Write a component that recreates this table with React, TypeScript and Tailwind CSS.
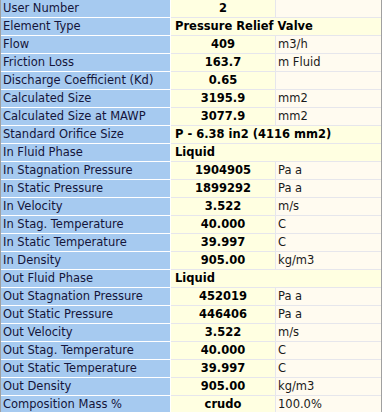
type Row = { label: string; value: string; unit?: string; span?: boolean }

const rows: Row[] = [
    { label: "User Number", value: "2", unit: "" },
    { label: "Element Type", value: "Pressure Relief Valve", span: true },
    { label: "Flow", value: "409", unit: "m3/h" },
    { label: "Friction Loss", value: "163.7", unit: "m Fluid" },
    { label: "Discharge Coefficient (Kd)", value: "0.65", unit: "" },
    { label: "Calculated Size", value: "3195.9", unit: "mm2" },
    { label: "Calculated Size at MAWP", value: "3077.9", unit: "mm2" },
    { label: "Standard Orifice Size", value: "P - 6.38 in2 (4116 mm2)", span: true },
    { label: "In Fluid Phase", value: "Liquid", span: true },
    { label: "In Stagnation Pressure", value: "1904905", unit: "Pa a" },
    { label: "In Static Pressure", value: "1899292", unit: "Pa a" },
    { label: "In Velocity", value: "3.522", unit: "m/s" },
    { label: "In Stag. Temperature", value: "40.000", unit: "C" },
    { label: "In Static Temperature", value: "39.997", unit: "C" },
    { label: "In Density", value: "905.00", unit: "kg/m3" },
    { label: "Out Fluid Phase", value: "Liquid", span: true },
    { label: "Out Stagnation Pressure", value: "452019", unit: "Pa a" },
    { label: "Out Static Pressure", value: "446406", unit: "Pa a" },
    { label: "Out Velocity", value: "3.522", unit: "m/s" },
    { label: "Out Stag. Temperature", value: "40.000", unit: "C" },
    { label: "Out Static Temperature", value: "39.997", unit: "C" },
    { label: "Out Density", value: "905.00", unit: "kg/m3" },
    { label: "Composition Mass %", value: "crudo", unit: "100.0%" },
]

export default function App() {
    return <div className="w-[382px] h-[412px] overflow-hidden bg-white border-l border-r border-[#a0a0a0] font-['DejaVu_Sans',Verdana,sans-serif] text-[11.5px] leading-[17px]">
        {
            rows.map((row, i) => <div key={i} className="flex flex-row h-[18px]">
                <div className="w-[170px] shrink-0 bg-[#a6caf0] border-r border-b border-white pl-[2px] text-[#15153a] whitespace-nowrap overflow-hidden">
                    {row.label}
                </div>
                {
                    row.span
                        ? <div className="flex-1 bg-[#ffffe1] border-b border-[#e6e6ec] pl-[4px] font-bold text-black whitespace-nowrap">{row.value}</div>
                        : <>
                            <div className="w-[105px] shrink-0 bg-[#ffffe1] border-r border-b border-[#e6e6ec] text-center font-bold text-black">{row.value}</div>
                            <div className="flex-1 bg-[#fffbf0] border-b border-[#e6e6ec] pl-[2px] text-[#1a1a1a]">{row.unit}</div>
                        </>
                }
            </div>)
        }
    </div>
}
